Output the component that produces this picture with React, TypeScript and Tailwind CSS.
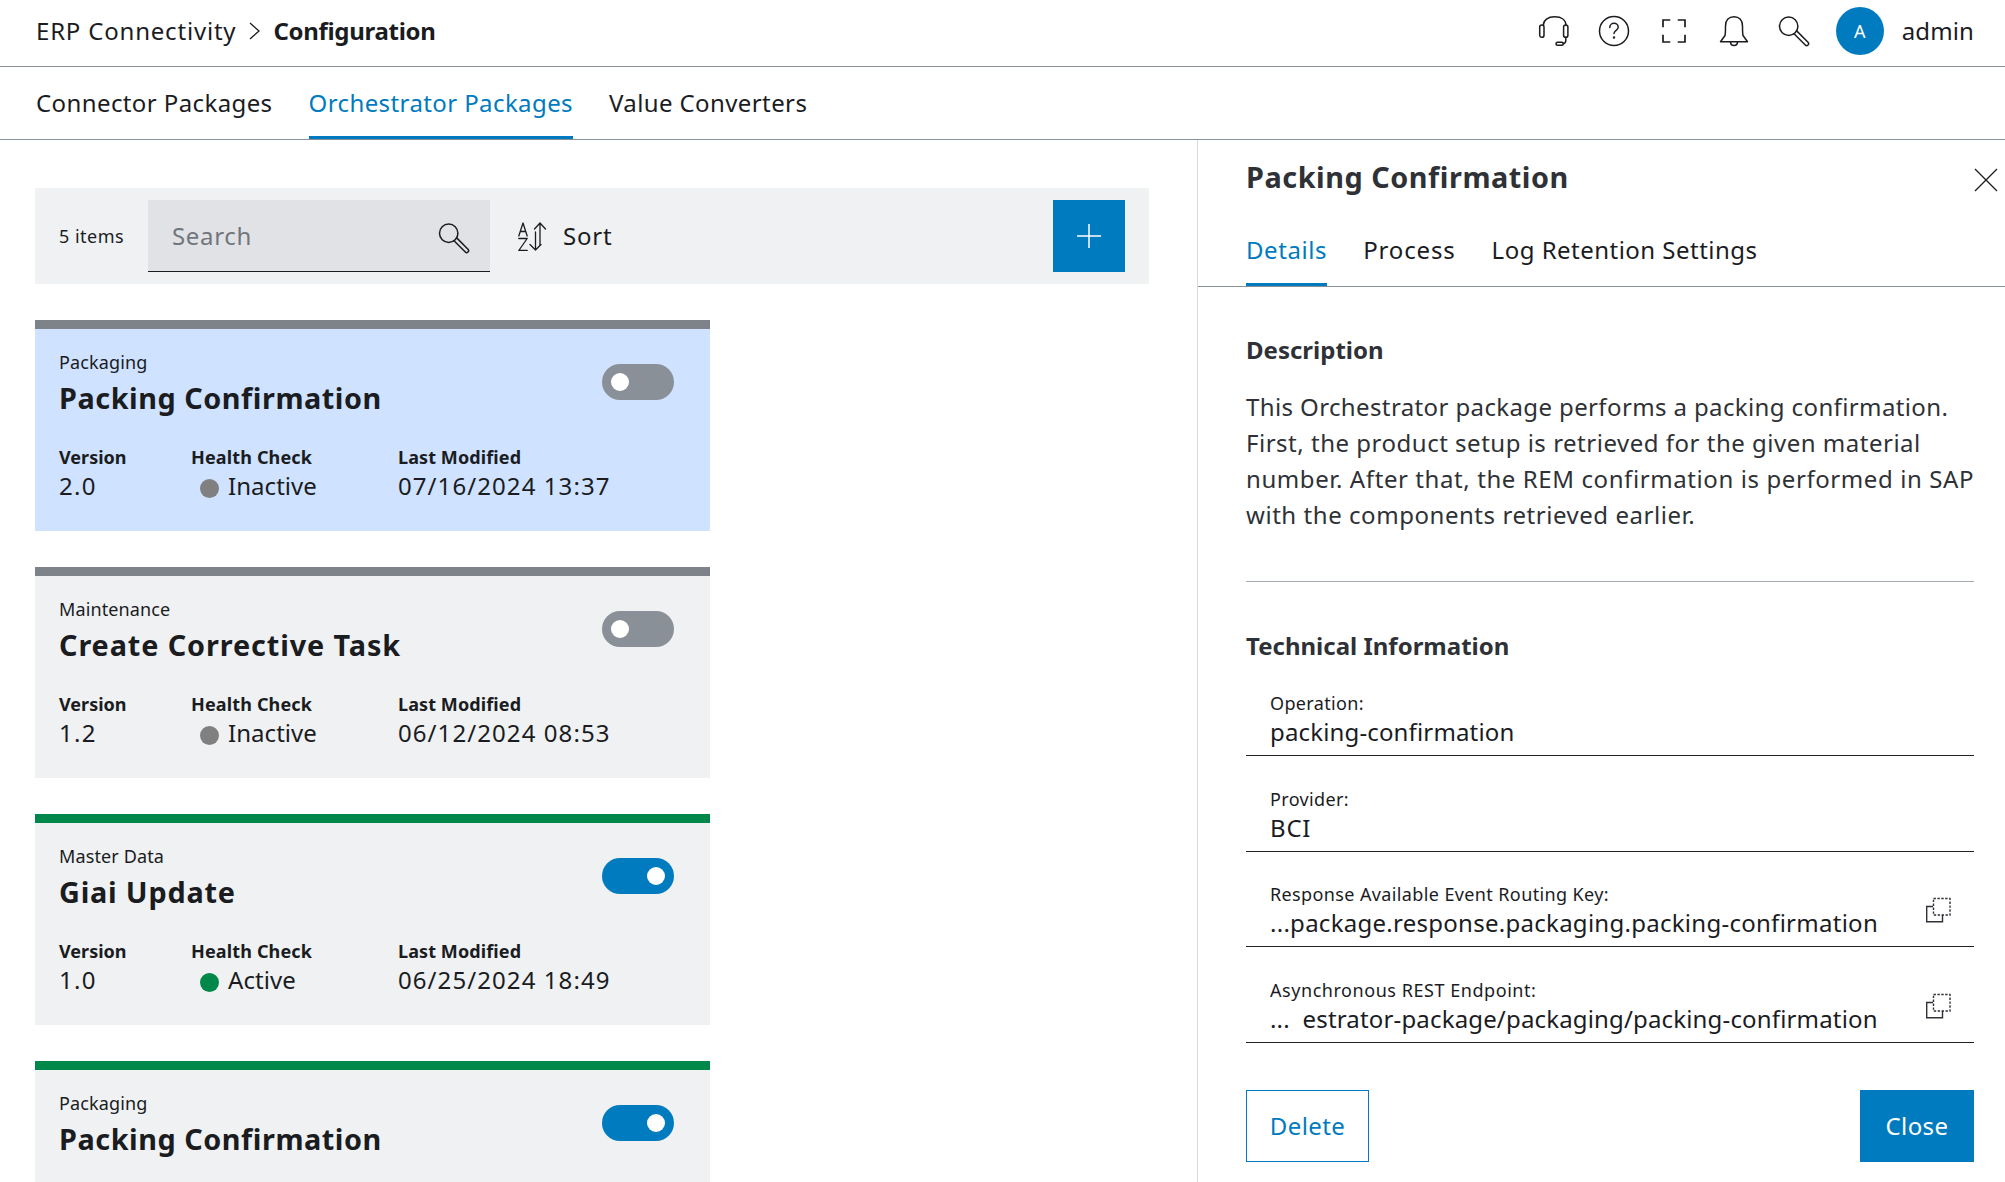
import React from "react";

const stroke = { fill: "none", stroke: "currentColor", strokeWidth: 1.5, strokeLinecap: "round" as const, strokeLinejoin: "round" as const };

function Headset() {
  return (
    <svg width="32" height="32" viewBox="-1 -1 32 32" {...stroke}>
      <path d="M4.300 9.500C4.300 4 9 .8 15.700 .8S27 4 27 9.500" />
      <rect x="0.700" y="9" width="4.300" height="12.300" rx="2.100" />
      <rect x="24.600" y="9" width="4.300" height="12.300" rx="2.100" />
      <path d="M26.800 21.300v3.200c0 1.500-.8 2.800-2.500 3.200" />
      <rect x="17" y="26.200" width="7.300" height="3.100" rx="1.500" />
    </svg>
  );
}
function Help() {
  return (
    <svg width="32" height="32" viewBox="-1 -1 32 32" {...stroke}>
      <circle cx="15" cy="15" r="14.500" />
      <path d="M10.800 11.500c0-2.500 2-4.200 4.200-4.200s4.200 1.600 4.200 3.900c0 3-4.200 3.200-4.200 6.300" />
      <circle cx="15" cy="21.500" r="0.500" fill="currentColor" />
    </svg>
  );
}
function Fullscreen() {
  return (
    <svg width="32" height="32" viewBox="-1 -1 32 32" fill="none" stroke="currentColor" strokeWidth="1.700">
      <path d="M11.300 4H4v7.300M18.700 4H26v7.300M4 18.700V26h7.300M26 18.700V26h-7.300" />
    </svg>
  );
}
function Bell() {
  return (
    <svg width="32" height="32" viewBox="-1 -1 32 32" {...stroke}>
      <path d="M1.500 25.700h27L24 19.500c-.5-2-.5-4.500-.5-9.500 0-6-3.500-9.300-8.500-9.300S6.500 4 6.500 10c0 5 0 7.500-.5 9.500z" />
      <path d="M11.500 25.700c0 2.500 1.500 3.800 3.500 3.800s3.500-1.300 3.500-3.800" />
    </svg>
  );
}
function Search({ size = 32 }: { size?: number }) {
  return (
    <svg width={size} height={size} viewBox="-1 -1 32 32" {...stroke}>
      <circle cx="9.700" cy="10.200" r="9.200" />
      <path d="M17.700 14.900L29 26.300c1 1 .7 2 0 2.700s-1.700 1-2.700 0L15 17.700" />
    </svg>
  );
}
function SortIcon() {
  return (
    <svg width="30" height="30" viewBox="0 0 30 30" fill="none" stroke="currentColor" strokeWidth="1.300" strokeLinecap="round" strokeLinejoin="round">
      <path d="M.8 15L5 2l4.200 13M2.200 10.500h5.600" />
      <path d="M.8 17.500h8.400L.8 29.500h8.400" />
      <path d="M22 24V2M16.500 8L22 2l5.500 6" />
      <path d="M17.500 11v18M12 23.500l5.500 5.500 5.500-5.500" />
    </svg>
  );
}
function Copy() {
  return (
    <svg width="26" height="26" viewBox="0 0 26 26" fill="none" stroke="currentColor" strokeWidth="1.400">
      <rect x="7.500" y="1.500" width="16.500" height="16.500" strokeDasharray="2.400 1.500" />
      <path d="M7 9.500H.7v15.200h15.800V18" />
    </svg>
  );
}

function Toggle({ on }: { on: boolean }) {
  return (
    <div className={`w-[72px] h-[36px] rounded-full flex items-center px-[9px] ${on ? "bg-[#007bc0] justify-end" : "bg-[#8a9097] justify-start"}`}>
      <div className="w-[18px] h-[18px] rounded-full bg-white" />
    </div>
  );
}

type Details = { version: string; status: string; date: string };
type CardProps = { cat: string; title: string; titleTrack: string; details?: Details; active: boolean; selected?: boolean };

function Card({ cat, title, titleTrack, details, active, selected }: CardProps) {
  return (
    <div className={`w-[675px] min-h-[211px] shrink-0 border-t-[9px] px-6 pt-[21px] pb-[27px] ${active ? "border-[#00884a]" : "border-[#7d8389]"} ${selected ? "bg-[#cfe2ff]" : "bg-[#eff1f2]"}`}>
      <div className="flex justify-between pr-3">
        <div>
          <div className="text-[18px] leading-[24px] tracking-[0.12px]">{cat}</div>
          <div className={`text-[28.800px] leading-[36px] font-bold mt-[6px] ${titleTrack}`}>{title}</div>
        </div>
        <div className="mt-[14px]"><Toggle on={active} /></div>
      </div>
      {details && (
        <div className="flex mt-[30px]">
          <div className="w-[132px]">
            <div className="text-[18px] leading-[22px] font-bold">Version</div>
            <div className="text-[24px] leading-[36px] tracking-[1.300px]">{details.version}</div>
          </div>
          <div className="w-[207px]">
            <div className="text-[18px] leading-[22px] font-bold tracking-[0.15px]">Health Check</div>
            <div className="text-[24px] leading-[36px] flex items-center pl-[9px] gap-[9px] tracking-[0.05px]">
              <span className={`w-[19px] h-[19px] rounded-full mt-[5px] ${active ? "bg-[#00884a]" : "bg-[#808080]"}`} />
              {details.status}
            </div>
          </div>
          <div>
            <div className="text-[18px] leading-[22px] font-bold tracking-[0.1px]">Last Modified</div>
            <div className="text-[24px] leading-[36px] tracking-[1.080px]">{details.date}</div>
          </div>
        </div>
      )}
    </div>
  );
}

function Field({ label, value, copy, first, labelTrack, valueTrack }: { label: string; value: string; copy?: boolean; first?: boolean; labelTrack: string; valueTrack: string }) {
  return (
    <div className={`flex items-end ${first ? "h-[78px]" : "h-[95.500px]"}`}>
      <div className="w-full h-[68px] border-b border-[#1f2428] pl-6 pr-[22px] pb-[5px] flex items-end justify-between">
        <div>
          <div className={`text-[18px] leading-[22px] ${labelTrack}`}>{label}</div>
          <div className={`text-[24px] leading-[36px] whitespace-pre ${valueTrack}`}>{value}</div>
        </div>
        {copy && <div className="text-[#2e3136] mb-[18px]"><Copy /></div>}
      </div>
    </div>
  );
}

export default function App() {
  return (
    <div className="w-[2005px] h-[1182px] overflow-hidden bg-white text-[#1a1c1f] flex flex-col font-['Noto_Sans',sans-serif]">
      <header className="h-[67px] shrink-0 border-b border-[#8a9097] flex items-center pl-9 pr-[31px] pb-[4px]">
        <div className="text-[24px] flex items-center">
          <span className="tracking-[0.8px]">ERP Connectivity</span>
          <svg className="mx-[13px]" width="11" height="20" viewBox="0 0 11 20" fill="none" stroke="currentColor" strokeWidth="1.300"><path d="M1 2l9 8-9 8" /></svg>
          <span className="font-bold tracking-[-0.3px]">Configuration</span>
        </div>
        <div className="ml-auto flex items-center">
          <div className="flex items-center gap-[28px]">
            <Headset /><Help /><Fullscreen /><Bell /><Search />
          </div>
          <div className="ml-[26px] w-[48px] h-[48px] rounded-full bg-[#007bc0] text-white flex items-center justify-center text-[18px]">A</div>
          <span className="ml-[18px] text-[24px] tracking-[0.1px]">admin</span>
        </div>
      </header>

      <nav className="h-[73px] shrink-0 border-b border-[#8a9097] flex items-stretch gap-9 pl-9 text-[24px] tracking-[0.4px]">
        <div className="flex items-center">Connector Packages</div>
        <div className="flex items-center text-[#007bc0] border-b-[3px] border-[#007bc0] pt-[3px]">Orchestrator Packages</div>
        <div className="flex items-center">Value Converters</div>
      </nav>

      <div className="flex flex-1 min-h-0">
        <main className="w-[1197px] shrink-0 pl-[35px] pr-[48px] pt-[48px] overflow-hidden flex flex-col gap-[36px]">
          <div className="h-[96px] shrink-0 bg-[#eff1f2] flex items-center pl-6 pr-6">
            <span className="text-[18px] w-[89px] tracking-[0.5px]">5 items</span>
            <div className="w-[342px] h-[72px] bg-[#e0e2e5] border-b border-[#1a1c1f] flex items-center justify-between pl-6 pr-[20px]">
              <span className="text-[24px] text-[#71767c] tracking-[0.65px]">Search</span>
              <div className="mt-[4px]"><Search size={32} /></div>
            </div>
            <div className="ml-[28px]"><SortIcon /></div>
            <span className="ml-[15px] text-[24px] tracking-[0.8px]">Sort</span>
            <div className="ml-auto w-[72px] h-[72px] bg-[#007bc0] text-white flex items-center justify-center">
              <svg width="28" height="28" viewBox="0 0 28 28" stroke="currentColor" strokeWidth="1.500"><path d="M14 2v24M2 14h24" /></svg>
            </div>
          </div>
          <Card cat="Packaging" title="Packing Confirmation" titleTrack="tracking-[0.55px]" details={{ version: "2.0", status: "Inactive", date: "07/16/2024 13:37" }} active={false} selected />
          <Card cat="Maintenance" title="Create Corrective Task" titleTrack="tracking-[0.9px]" details={{ version: "1.2", status: "Inactive", date: "06/12/2024 08:53" }} active={false} />
          <Card cat="Master Data" title="Giai Update" titleTrack="tracking-[0.8px]" details={{ version: "1.0", status: "Active", date: "06/25/2024 18:49" }} active />
          <Card cat="Packaging" title="Packing Confirmation" titleTrack="tracking-[0.55px]" active />
        </main>

        <aside className="flex-1 border-l border-[#d8dbde] flex flex-col min-w-0">
          <div className="h-[73px] shrink-0 flex items-start justify-between pl-12 pr-[7px] pt-[18px]">
            <h1 className="text-[28.800px] leading-[38px] font-bold text-[#2e3136] tracking-[0.55px]">Packing Confirmation</h1>
            <svg className="mt-[10px]" width="24" height="24" viewBox="0 0 24 24" stroke="currentColor" strokeWidth="1.300"><path d="M1 1l22 22M23 1L1 23" /></svg>
          </div>
          <div className="h-[74px] shrink-0 border-b border-[#8a9097] flex items-stretch gap-9 pl-12 text-[24px]">
            <div className="flex items-center text-[#007bc0] border-b-[3px] border-[#007bc0] pt-[4px] tracking-[0.58px]">Details</div>
            <div className="flex items-center pt-[1px] tracking-[0.85px]">Process</div>
            <div className="flex items-center pt-[1px] tracking-[0.48px]">Log Retention Settings</div>
          </div>
          <div className="pl-12 pr-[31px] pt-[45px] flex flex-col flex-1 min-h-0">
            <h2 className="text-[24px] leading-[36px] font-bold text-[#2e3136]">Description</h2>
            <p className="text-[24px] leading-[36px] mt-[21px] text-[#2e3136] whitespace-nowrap">
              <span className="block tracking-[0.38px]">This Orchestrator package performs a packing confirmation.</span>
              <span className="block tracking-[0.51px]">First, the product setup is retrieved for the given material</span>
              <span className="block tracking-[0.59px]">number. After that, the REM confirmation is performed in SAP</span>
              <span className="block tracking-[0.55px]">with the components retrieved earlier.</span>
            </p>
            <div className="border-t border-[#a4abb3] mt-[48px]" />
            <h2 className="text-[24px] leading-[36px] font-bold text-[#2e3136] mt-[46px]">Technical Information</h2>
            <div className="mt-[14px] flex flex-col">
              <Field first label="Operation:" value="packing-confirmation" labelTrack="tracking-[0.35px]" valueTrack="tracking-[0.15px]" />
              <Field label="Provider:" value="BCI" labelTrack="tracking-[0.35px]" valueTrack="tracking-[0.8px]" />
              <Field label="Response Available Event Routing Key:" value="...package.response.packaging.packing-confirmation" copy labelTrack="tracking-[0.38px]" valueTrack="tracking-[0.27px]" />
              <Field label="Asynchronous REST Endpoint:" value="...  estrator-package/packaging/packing-confirmation" copy labelTrack="tracking-[0.55px]" valueTrack="tracking-[0.16px]" />
            </div>
            <div className="flex justify-between mt-[47px] text-[24px] tracking-[0.4px]">
              <div className="w-[123px] h-[72px] border border-[#007bc0] text-[#007bc0] flex items-center justify-center">Delete</div>
              <div className="w-[114px] h-[72px] bg-[#007bc0] text-white flex items-center justify-center">Close</div>
            </div>
          </div>
        </aside>
      </div>
    </div>
  );
}
